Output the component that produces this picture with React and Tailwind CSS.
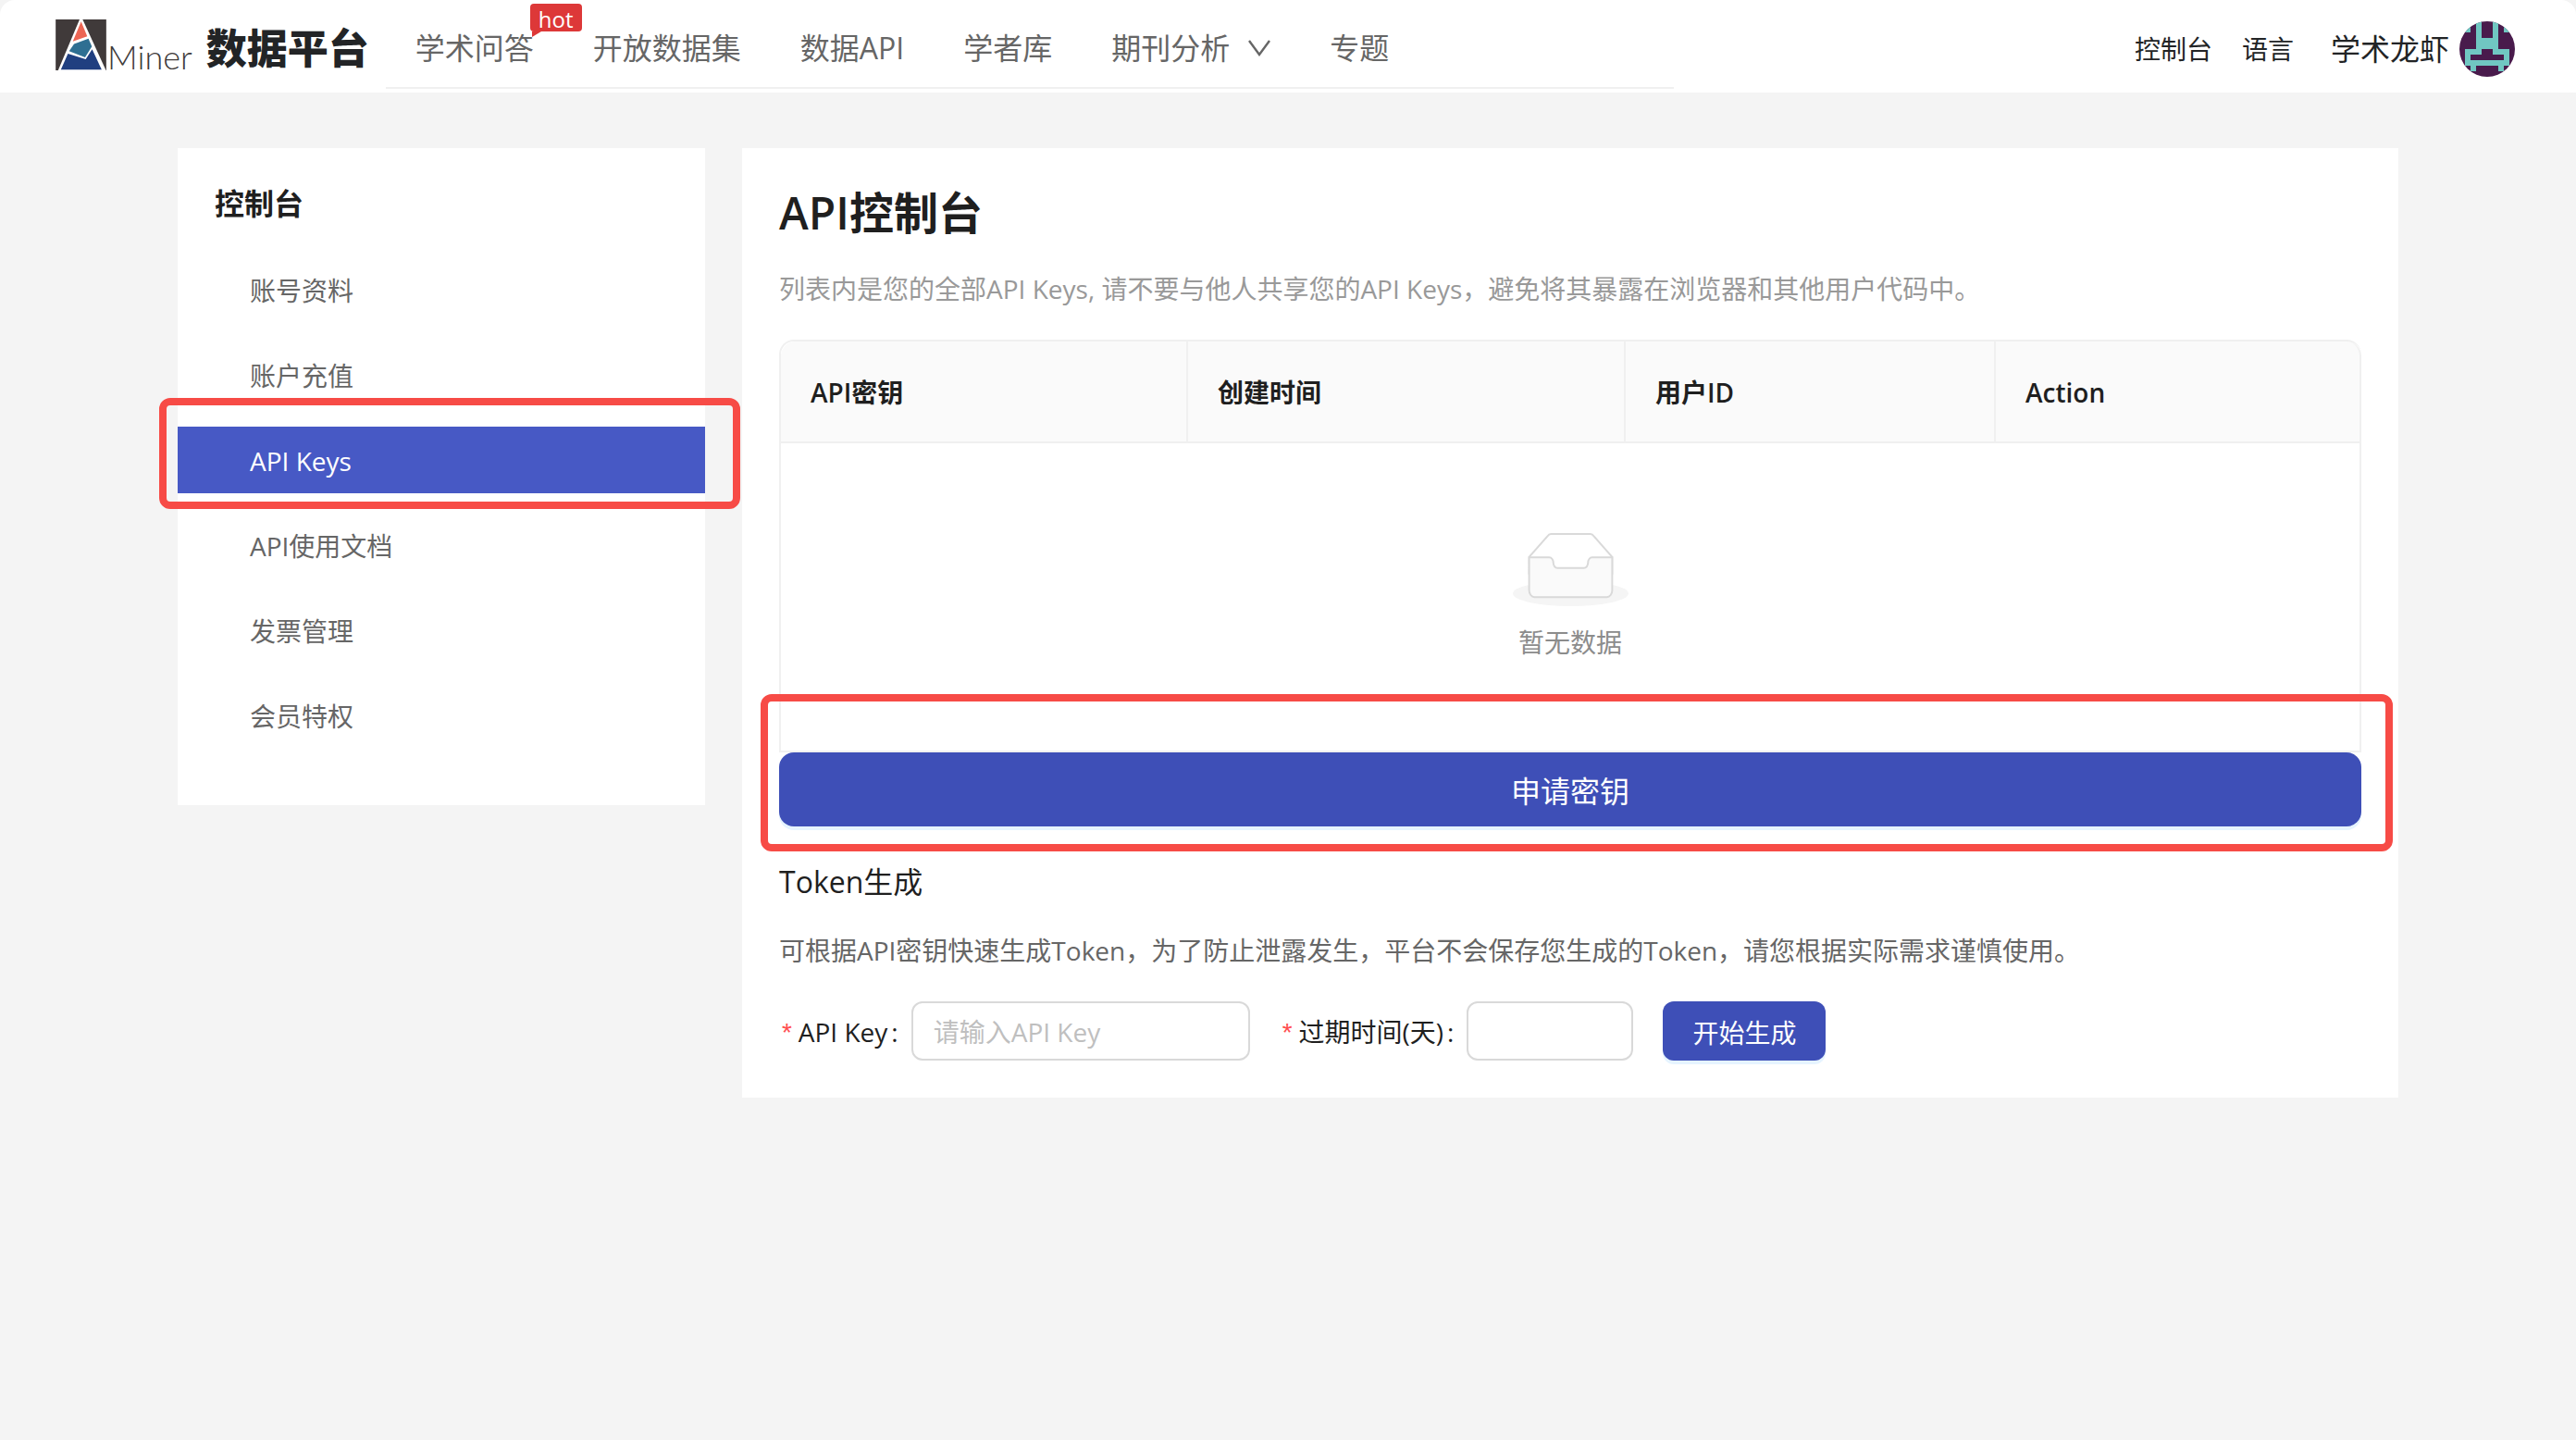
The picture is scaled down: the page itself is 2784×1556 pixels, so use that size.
import { clsx } from 'clsx'

const navItems = [
  { label: '学术问答', hot: true },
  { label: '开放数据集' },
  { label: '数据API' },
  { label: '学者库' },
  { label: '期刊分析', dropdown: true },
  { label: '专题' },
]

const sideItems = ['账号资料', '账户充值', 'API Keys', 'API使用文档', '发票管理', '会员特权']

const columns = [
  { label: 'API密钥', width: 'w-[440px]' },
  { label: '创建时间', width: 'w-[473px]' },
  { label: '用户ID', width: 'w-[400px]' },
  { label: 'Action', width: 'w-auto' },
]

// 10x10 identicon, one string per row
const avatarRows = [
  '1101001011',
  '1101001011',
  '0001001000',
  '0001111000',
  '0001111000',
  '0111001110',
  '0100000010',
  '0111111110',
  '0010000100',
  '0000000000',
]

function Logo() {
  return (
    <a href="#" className="flex items-end gap-px" aria-label="AMiner">
      <svg viewBox="0 0 165 166" className="w-[55px] h-[55px]">
        <rect width="165" height="166" fill="#403a3a" />
        <path d="M78 0h10l76 166H8z" fill="#fff" />
        <path d="M83 7l20 48-47 17z" fill="#ec6554" />
        <path d="M60 80l47-17 11 25-22 36-52-21z" fill="#2e6f92" />
        <path d="M40 112l58 18 21-33 31 67H17z" fill="#203f80" />
      </svg>
      <span className="font-['Lato'] font-light text-4xl leading-[30px] text-[#403a3a]">Miner</span>
    </a>
  )
}

function Avatar() {
  return (
    <svg viewBox="0 0 10 10" className="w-[60px] h-[60px] rounded-full" shapeRendering="crispEdges">
      <rect width="10" height="10" fill="#491b4c" />
      {avatarRows.map((row, y) =>
        row.split('').map((cell, x) =>
          cell === '1' ? <rect key={`${x}-${y}`} x={x} y={y} width="1" height="1" fill="#70c7c2" /> : null
        )
      )}
    </svg>
  )
}

function EmptyIcon() {
  return (
    <svg viewBox="0 0 64 41" className="w-[125px] h-20">
      <g transform="translate(0 1)" fill="none" fillRule="evenodd">
        <ellipse fill="#f5f5f5" cx="32" cy="33" rx="32" ry="7" />
        <g fillRule="nonzero" stroke="#d9d9d9">
          <path d="M55 12.76L44.854 1.258C44.367.474 43.656 0 42.907 0H21.093c-.749 0-1.46.474-1.947 1.257L9 12.761V22h46v-9.24z" />
          <path
            d="M41.613 15.931c0-1.605.994-2.93 2.227-2.931H55v18.137C55 33.26 53.68 35 52.05 35h-40.1C10.32 35 9 33.259 9 31.137V13h11.16c1.233 0 2.227 1.323 2.227 2.928v.022c0 1.605 1.005 2.901 2.237 2.901h14.752c1.232 0 2.237-1.308 2.237-2.913v-.007z"
            fill="#fafafa"
          />
        </g>
      </g>
    </svg>
  )
}

function Header() {
  return (
    <header className="h-[100px] bg-white rounded-t-2xl pl-[60px] pr-[66px] flex items-center">
      <div className="pb-1 flex items-center gap-[15px]">
        <Logo />
        <span className="pt-2 text-[44px] leading-[60px] font-black text-[#222426]">数据平台</span>
      </div>

      <nav className="self-end h-24 w-[1392px] mb-1 ml-[18px] px-8 pt-[10px] flex items-center gap-16 border-b-2 border-[#f0f0f0] text-[32px] leading-[48px] text-[#666]">
        {navItems.map((item) => (
          <a key={item.label} href="#" className="relative flex items-center gap-5 whitespace-nowrap">
            {item.label}
            {item.dropdown && (
              <svg viewBox="0 0 24 18" className="w-6 h-[18px]" fill="none" stroke="currentColor" strokeWidth="2.4">
                <path d="M1 1l11 15L23 1" />
              </svg>
            )}
            {item.hot && (
              <span className="absolute -top-6 left-31 w-14 h-[30px] rounded-sm bg-[#dd3838] text-white text-2xl leading-[34px] text-center">
                hot
                <svg viewBox="0 0 10 6" className="absolute top-full left-[2px] w-[10px] h-[6px]">
                  <path d="M0 0h10L0 6z" fill="#dd3838" />
                </svg>
              </span>
            )}
          </a>
        ))}
      </nav>

      <div className="ml-auto pt-1.5 flex items-center text-[28px] leading-[48px] text-[#222426] whitespace-nowrap">
        <a href="#">控制台</a>
        <a href="#" className="ml-8">语言</a>
        <a href="#" className="ml-10 flex items-center gap-[11px] text-[32px]">
          学术龙虾
          <Avatar />
        </a>
      </div>
    </header>
  )
}

function Sidebar() {
  return (
    <aside className="w-[570px] shrink-0 bg-white pt-[35px] pb-[61px]">
      <h2 className="px-10 text-[32px] leading-[50px] font-bold text-[#1f1f1f]">控制台</h2>
      <nav className="mt-8 flex flex-col gap-5">
        {sideItems.map((label) => {
          const active = label === 'API Keys'
          return (
            <a
              key={label}
              href="#"
              className={clsx(
                'relative h-[72px] pl-[78px] pt-0.5 flex items-center text-[28px]',
                active ? 'bg-[#4759c5] text-white' : 'text-[#666]'
              )}
            >
              {label}
              {active && (
                <span className="absolute -left-5 -right-[38px] -top-[31px] -bottom-[17px] z-10 border-8 border-[#f74b46] rounded-xl pointer-events-none" />
              )}
            </a>
          )
        })}
      </nav>
    </aside>
  )
}

function KeyTable() {
  return (
    <table className="w-full table-fixed border-separate border-spacing-0 border-l-2 border-t-2 border-[#f0f0f0] rounded-t-2xl text-[28px]">
      <thead>
        <tr>
          {columns.map((col) => (
            <th
              key={col.label}
              scope="col"
              className={clsx(
                col.width,
                'h-[110px] px-8 pt-0.5 text-left font-semibold text-[#1f1f1f] bg-[#fafafa] border-r-2 border-b-2 border-[#f0f0f0] first:rounded-tl-2xl last:rounded-tr-2xl'
              )}
            >
              {col.label}
            </th>
          ))}
        </tr>
      </thead>
      <tbody>
        <tr>
          <td colSpan={4} className="h-[334px] pt-24 align-top border-r-2 border-b-2 border-[#f0f0f0]">
            <div className="flex flex-col items-center gap-4 leading-[46px] text-[#8c8c8c]">
              <EmptyIcon />
              暂无数据
            </div>
          </td>
        </tr>
      </tbody>
    </table>
  )
}

function FieldLabel({ htmlFor, children }) {
  return (
    <label htmlFor={htmlFor} className="pt-0.5 flex items-center whitespace-nowrap">
      <span className="pt-2 mr-1 text-[#ff4d4f] font-['Liberation_Mono']">*</span>
      {children}
      <span className="mx-1">:</span>
    </label>
  )
}

function TokenForm() {
  return (
    <form className="mt-[33px] flex items-center gap-8 text-[28px] text-[#1f1f1f]" onSubmit={(e) => e.preventDefault()}>
      <div className="flex items-center gap-2.5">
        <FieldLabel htmlFor="apiKey">API Key</FieldLabel>
        <input
          id="apiKey"
          type="text"
          placeholder="请输入API Key"
          className="w-[366px] h-16 px-[22px] pt-0.5 border-2 border-[#d9d9d9] rounded-xl placeholder:text-[#bfbfbf]"
        />
      </div>
      <div className="flex items-center gap-2.5">
        <FieldLabel htmlFor="expireDays">过期时间(天)</FieldLabel>
        <input
          id="expireDays"
          type="text"
          className="w-[180px] h-16 px-[22px] pt-0.5 border-2 border-[#d9d9d9] rounded-xl"
        />
      </div>
      <button type="submit" className="h-16 w-44 pt-1 rounded-xl bg-[#3e4fb7] text-white shadow-[0_4px_0_#e6f4ff]">
        开始生成
      </button>
    </form>
  )
}

export default function App() {
  return (
    <div className="min-h-screen bg-[#f4f4f4] font-['Open_Sans','Noto_Sans_CJK_SC',sans-serif]">
      <Header />
      <div className="max-w-[2400px] mx-auto pt-[60px] flex items-start gap-10">
        <Sidebar />
        <main className="flex-1 bg-white p-10">
          <h1 className="text-5xl leading-[60px] font-semibold text-[#1f1f1f]">API控制台</h1>
          <p className="mt-[30px] mb-[33px] text-[28px] leading-[44px] text-[#999]">
            列表内是您的全部API Keys, 请不要与他人共享您的API Keys，避免将其暴露在浏览器和其他用户代码中。
          </p>
          <KeyTable />
          <div className="relative">
            <button
              type="button"
              className="w-full h-20 pt-1 rounded-2xl bg-[#3e4fb7] text-white text-[32px] shadow-[0_4px_0_#e6f4ff]"
            >
              申请密钥
            </button>
            <span className="absolute -left-5 -right-[34px] -top-[63px] -bottom-[27px] border-8 border-[#f74b46] rounded-xl pointer-events-none" />
          </div>
          <h2 className="mt-9 text-[32px] leading-[48px] text-[#1f1f1f]">Token生成</h2>
          <p className="mt-7 text-[28px] leading-[44px] text-[#666]">
            可根据API密钥快速生成Token，为了防止泄露发生，平台不会保存您生成的Token，请您根据实际需求谨慎使用。
          </p>
          <TokenForm />
        </main>
      </div>
    </div>
  )
}
